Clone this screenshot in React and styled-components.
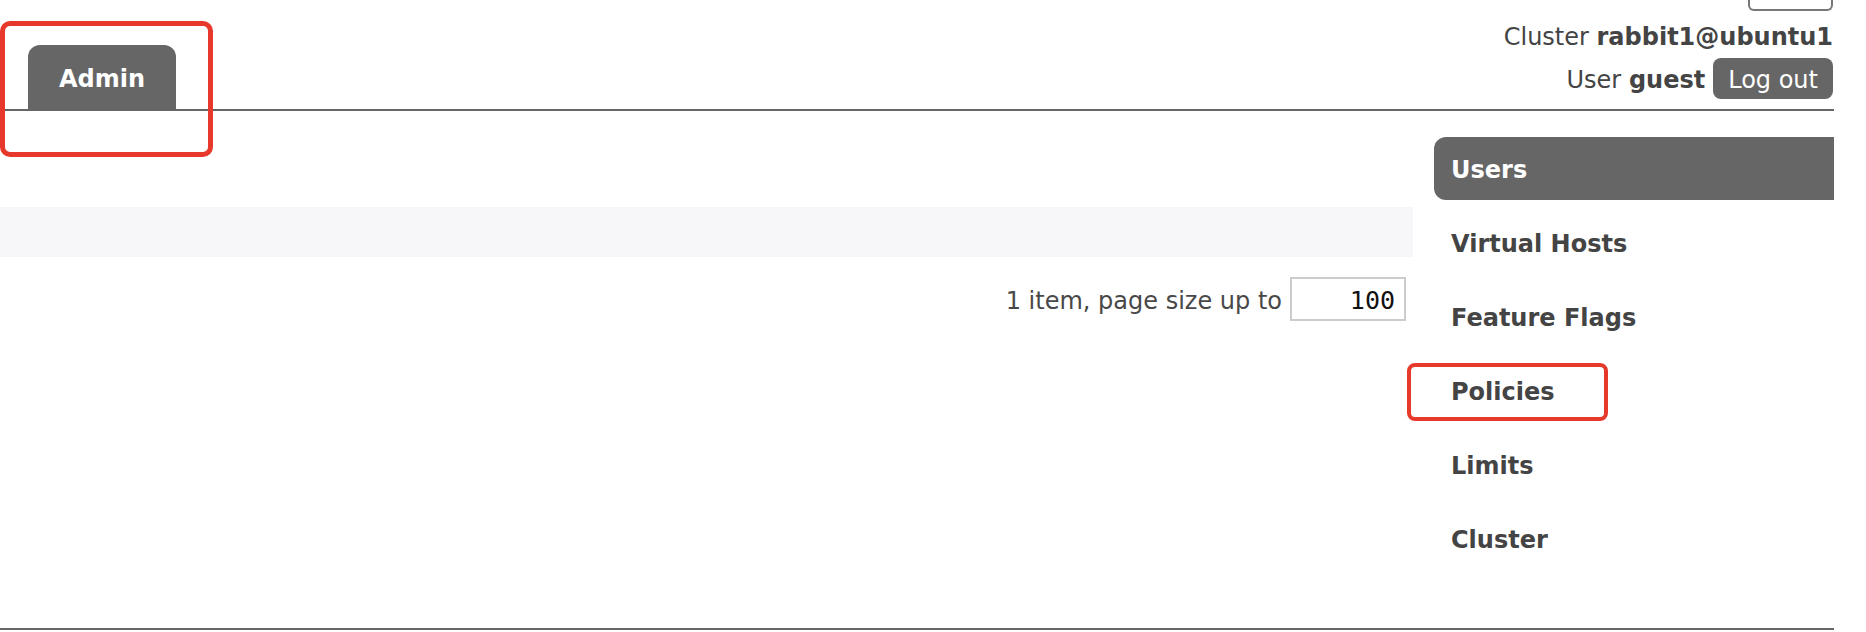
import React from 'react';
import styled, { createGlobalStyle } from 'styled-components';

const GlobalStyle = createGlobalStyle`
    html, body {
        margin: 0;
        padding: 0;
        background: #ffffff;
    }
    body {
        font-family: "DejaVu Sans", Verdana, sans-serif;
        font-size: 24px;
        color: #444444;
    }
`

const adminNav = [
    { title: "Users", active: true },
    { title: "Virtual Hosts" },
    { title: "Feature Flags" },
    { title: "Policies", marked: true },
    { title: "Limits" },
    { title: "Cluster" },
]

function App() {
  return (
    <>
        <GlobalStyle/>
        <Page>
            <Header>
                <Tabs>
                    <Tab marked>Admin</Tab>
                </Tabs>
                <Login>
                    <SelectStub/>
                    <InfoLine>Cluster <b>rabbit1@ubuntu1</b></InfoLine>
                    <UserLine>
                        <UserName>User <b>guest</b></UserName>
                        <LogoutButton>Log out</LogoutButton>
                    </UserLine>
                </Login>
            </Header>
            <Main>
                <Content>
                    <FilterBar/>
                    <Pagination>
                        <PageInfo>1 item, page size up to</PageInfo>
                        <PageSize type="text" defaultValue="100" readOnly/>
                    </Pagination>
                </Content>
                <SideNav>
                    {adminNav.map((item) => (
                        <NavItem key={item.title} $active={item.active} $marked={item.marked}>
                            {item.title}
                        </NavItem>
                    ))}
                </SideNav>
            </Main>
            <Footer/>
        </Page>
    </>
  )
}

export default App

const Page = styled.div`
    width: 1834px;
`

const Header = styled.div`
    display: flex;
    justify-content: space-between;
    height: 109px;
    border-bottom: 2px solid #666666;
`

const Tabs = styled.div`
    display: flex;
    align-items: flex-end;
    padding-left: 28px;
`

const Tab = styled.div`
    position: relative;
    height: 59px;
    padding: 5px 31px 0;
    line-height: 59px;
    background: #666667;
    color: #ffffff;
    font-weight: bold;
    border-radius: 12px 12px 0 0;
    ${(p) => p.marked && `
        &::after {
            content: "";
            position: absolute;
            left: -28px;
            top: -24px;
            width: 213px;
            height: 136px;
            box-sizing: border-box;
            border: 5px solid #e6392b;
            border-radius: 10px;
        }
    `}
`

const Login = styled.div`
    display: flex;
    flex-direction: column;
    align-items: flex-end;
    padding-right: 1px;
`

const SelectStub = styled.div`
    width: 81px;
    height: 9px;
    border: 2px solid #777777;
    border-top: none;
    border-radius: 0 0 6px 6px;
`

const InfoLine = styled.div`
    margin-top: 11px;
    line-height: 30px;
    white-space: nowrap;
`

const UserLine = styled.div`
    display: flex;
    align-items: center;
    margin-top: 6px;
    white-space: nowrap;
`

const UserName = styled.span`
    padding-top: 2px;
`

const LogoutButton = styled.button`
    height: 41px;
    margin-left: 8px;
    padding: 2px 15px 0;
    border: none;
    border-radius: 8px;
    background: #666667;
    color: #ffffff;
    font-family: inherit;
    font-size: 24px;
`

const Main = styled.div`
    display: flex;
    justify-content: space-between;
    min-height: 517px;
`

const Content = styled.div`
    width: 1413px;
    padding-top: 96px;
`

const FilterBar = styled.div`
    height: 50px;
    background: #f7f7f9;
`

const Pagination = styled.div`
    display: flex;
    justify-content: flex-end;
    align-items: center;
    gap: 8px;
    margin-top: 20px;
    padding-right: 7px;
    color: #484848;
`

const PageInfo = styled.span`
    padding-top: 4px;
`

const PageSize = styled.input`
    width: 116px;
    height: 44px;
    box-sizing: border-box;
    padding: 2px 9px 0;
    border: 2px solid #cccccc;
    font-family: "DejaVu Sans Mono", monospace;
    font-size: 25px;
    color: #111111;
    text-align: right;
    outline: none;
`

const SideNav = styled.ul`
    list-style: none;
    margin: 26px 0 0;
    padding: 0;
    width: 400px;
    display: flex;
    flex-direction: column;
    gap: 11px;
`

const NavItem = styled.li`
    position: relative;
    height: 59px;
    padding: 4px 0 0 17px;
    line-height: 59px;
    font-weight: bold;
    color: ${(p) => (p.$active ? '#ffffff' : '#444444')};
    background: ${(p) => (p.$active ? '#666667' : 'transparent')};
    border-radius: 12px 0 0 12px;
    ${(p) => p.$marked && `
        &::after {
            content: "";
            position: absolute;
            left: -27px;
            top: 4px;
            width: 201px;
            height: 58px;
            box-sizing: border-box;
            border: 4px solid #e6392b;
            border-radius: 8px;
        }
    `}
`

const Footer = styled.div`
    border-top: 2px solid #666666;
`
